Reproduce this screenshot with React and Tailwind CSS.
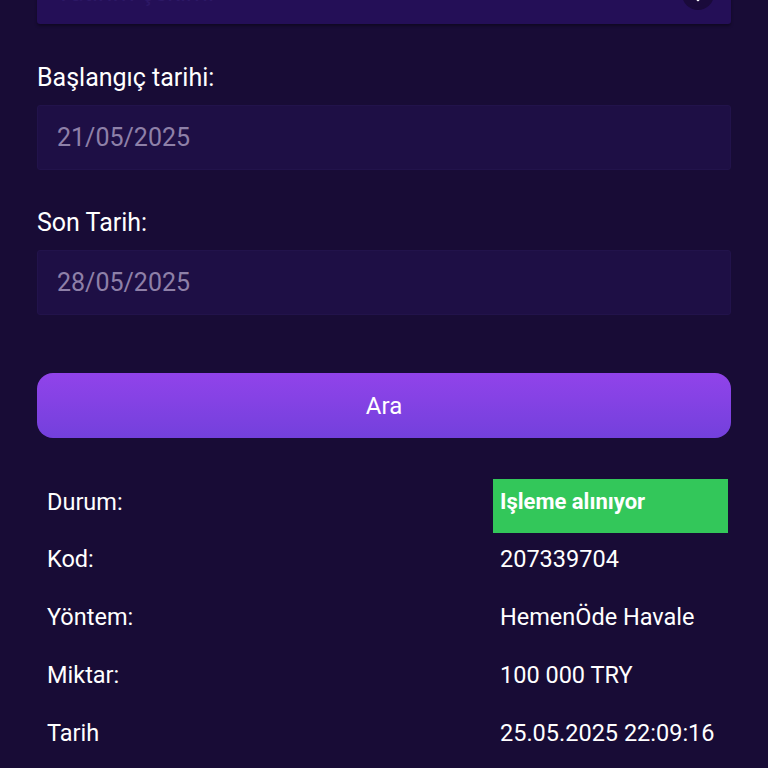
import React from 'react';

const rows = [
  { label: 'Kod:', value: '207339704' },
  { label: 'Yöntem:', value: 'HemenÖde Havale' },
  { label: 'Miktar:', value: '100 000 TRY' },
  { label: 'Tarih', value: '25.05.2025 22:09:16' },
];

const DateField = ({ label, value }) => (
  <div className="flex flex-col">
    <label className="text-[25px] leading-[26px] text-white mb-[14px]">{label}</label>
    <div className="h-[65px] flex items-center px-[19px] bg-[#1e0f45] border border-[#22134b] rounded-[3px] text-[25px] text-[#8e80a8]">
      {value}
    </div>
  </div>
);

export default function App() {
  return (
    <div className="min-h-[768px] bg-[#180c36] overflow-hidden" style={{ fontFamily: 'Roboto, "Noto Sans", sans-serif' }}>
      <div className="px-[37px]">
        <div className="-mt-[41px] h-[65px] bg-[#240f57] rounded-[3px] flex items-center justify-between pl-[19px] pr-[17px] shadow-[0_2px_3px_rgba(0,0,0,0.35)]">
          <span className="text-[25px] text-[#2d1865] mt-[2px]">Yatırım çekimi</span>
          <div className="w-[32px] h-[32px] rounded-full bg-[#1a0a3b] flex items-start justify-center mt-[5px]">
            <svg width="14" height="14" viewBox="0 0 14 14" className="mt-[12px]">
              <path d="M2 4 L7 10 L12 4" fill="none" stroke="#ffffff" strokeWidth="2.5" strokeLinecap="round" strokeLinejoin="round" />
            </svg>
          </div>
        </div>

        <div className="mt-[41px] flex flex-col gap-[40px]">
          <DateField label="Başlangıç tarihi:" value="21/05/2025" />
          <DateField label="Son Tarih:" value="28/05/2025" />
        </div>

        <button className="mt-[58px] w-full h-[65px] rounded-[16px] bg-gradient-to-b from-[#9143ea] to-[#7340dc] text-white text-[24px]">
          Ara
        </button>

        <div className="mt-[41px] mx-[3px]">
          <div className="grid grid-cols-[453px_1fr] h-[58px]">
            <div className="pl-[7px] pt-[10px] text-[23.5px] leading-[26px] text-white">Durum:</div>
            <div className="h-[54px] bg-[#33c75a] pl-[7px] pt-[10px] text-[22px] leading-[26px] font-bold text-white">
              Işleme alınıyor
            </div>
          </div>
          {rows.map((r) => (
            <div key={r.label} className="grid grid-cols-[453px_1fr] h-[58px]">
              <div className="pl-[7px] pt-[9px] text-[23.5px] leading-[26px] text-white">{r.label}</div>
              <div className="pl-[7px] pt-[9px] text-[23.5px] leading-[26px] text-white">{r.value}</div>
            </div>
          ))}
        </div>
      </div>
    </div>
  );
}
